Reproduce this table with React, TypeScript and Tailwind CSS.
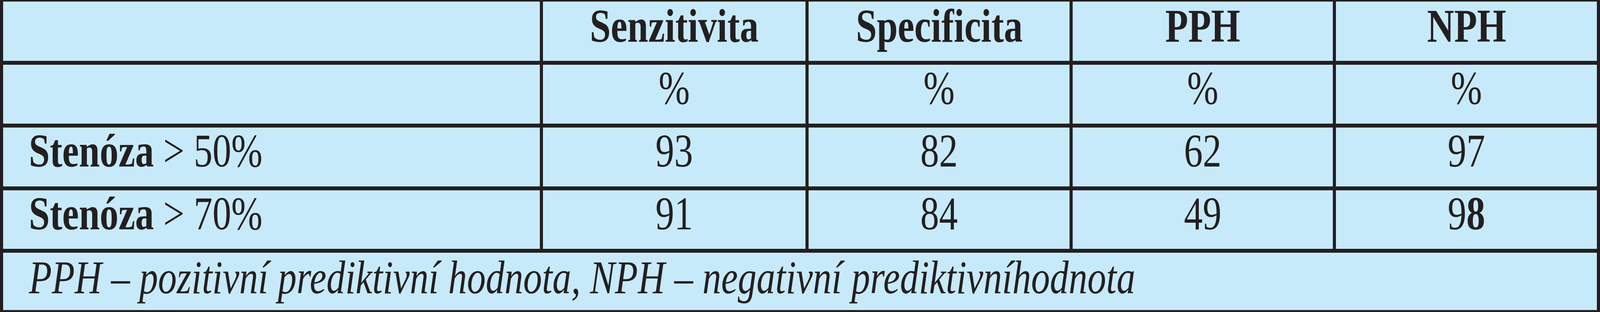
import React from "react";

const headers = ["Senzitivita", "Specificita", "PPH", "NPH"];

interface Row {
  label: string;
  rest: string;
  values: React.ReactNode[];
}

const rows: Row[] = [
  { label: "Stenóza", rest: " > 50%", values: ["93", "82", "62", "97"] },
  {
    label: "Stenóza",
    rest: " > 70%",
    values: [
      "91",
      "84",
      "49",
      <>
        9<span className="font-bold">8</span>
      </>,
    ],
  },
];

function Cell({
  children,
  className = "",
}: {
  children?: React.ReactNode;
  className?: string;
}) {
  return (
    <div
      className={`min-w-0 bg-[#c7eafb] text-[120px] leading-none text-[#231f20] whitespace-nowrap ${className}`}
    >
      {children}
    </div>
  );
}

// the table is set in a narrow serif, so squeeze the glyphs a bit
function Narrow({
  children,
  left = false,
}: {
  children: React.ReactNode;
  left?: boolean;
}) {
  return (
    <span className={`inline-block scale-x-[0.8] ${left ? "origin-left" : "origin-center"}`}>
      {children}
    </span>
  );
}

export default function App() {
  return (
    <div
      className="w-full h-[800px] overflow-hidden bg-[#231f20] pt-[4px] pb-[5px] px-[8px]"
      style={{ fontFamily: '"Liberation Serif", "Times New Roman", serif' }}
    >
      <div className="grid grid-cols-[1717fr_839fr_835fr_832fr_834fr] grid-rows-[152px_151px_151px_150px_147px] gap-x-[8px] gap-y-[10px] h-full">
        {/* header */}
        <Cell />
        {headers.map((h) => (
          <Cell key={h} className="text-center font-bold pt-[3px]">
            <Narrow>{h}</Narrow>
          </Cell>
        ))}

        {/* units */}
        <Cell />
        {headers.map((h) => (
          <Cell key={h + "-pct"} className="text-center">
            <Narrow>%</Narrow>
          </Cell>
        ))}

        {/* data */}
        {rows.map((r, i) => (
          <React.Fragment key={i}>
            <Cell className="pl-[66px]">
              <Narrow left>
                <span className="font-bold">{r.label}</span>
                {r.rest}
              </Narrow>
            </Cell>
            {r.values.map((v, j) => (
              <Cell key={j} className="text-center">
                <Narrow>{v}</Narrow>
              </Cell>
            ))}
          </React.Fragment>
        ))}

        {/* footnote */}
        <Cell className="col-span-5 pl-[66px] pt-[4px] italic">
          <Narrow left>
            PPH – pozitivní prediktivní hodnota, NPH – negativní prediktivníhodnota
          </Narrow>
        </Cell>
      </div>
    </div>
  );
}
